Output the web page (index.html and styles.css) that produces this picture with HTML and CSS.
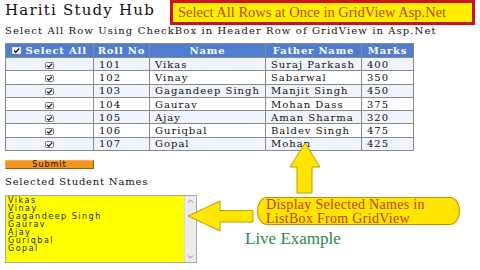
FILE: index.html
```html
<!DOCTYPE html>
<html>
<head>
<meta charset="utf-8">
<link rel="stylesheet" href="styles.css">
</head>
<body>
<div class="page">
  <header class="top">
    <h1 class="brand">Hariti Study Hub</h1>
    <div class="banner">Select All Rows at Once in GridView Asp.Net</div>
  </header>
  <p class="subtitle">Select All Row Using CheckBox in Header Row of GridView in Asp.Net</p>
  <table class="grid">
    <colgroup>
      <col class="c1"><col class="c2"><col class="c3"><col class="c4"><col class="c5">
    </colgroup>
    <thead>
      <tr>
        <th><svg class="hchk" viewBox="0 0 9 7" width="9" height="7"><rect x="0.5" y="0.5" width="8" height="6" fill="#fff" stroke="#dfe6f5"/><path d="M2 3.6 L3.8 5.2 L7.2 1.6" fill="none" stroke="#111" stroke-width="1.4"/></svg> Select All</th>
        <th>Roll No</th>
        <th>Name</th>
        <th>Father Name</th>
        <th>Marks</th>
      </tr>
    </thead>
    <tbody>
      <tr class="odd"><td class="chk"><svg viewBox="0 0 9 7" width="9" height="7"><rect x="0.5" y="0.5" width="8" height="6" rx="1" fill="#f6f6f6" stroke="#7a7a7a"/><path d="M2 3.6 L3.8 5.2 L7.2 1.6" fill="none" stroke="#111" stroke-width="1.2"/></svg></td><td>101</td><td>Vikas</td><td>Suraj Parkash</td><td>400</td></tr>
      <tr><td class="chk"><svg viewBox="0 0 9 7" width="9" height="7"><rect x="0.5" y="0.5" width="8" height="6" rx="1" fill="#f6f6f6" stroke="#7a7a7a"/><path d="M2 3.6 L3.8 5.2 L7.2 1.6" fill="none" stroke="#111" stroke-width="1.2"/></svg></td><td>102</td><td>Vinay</td><td>Sabarwal</td><td>350</td></tr>
      <tr class="odd"><td class="chk"><svg viewBox="0 0 9 7" width="9" height="7"><rect x="0.5" y="0.5" width="8" height="6" rx="1" fill="#f6f6f6" stroke="#7a7a7a"/><path d="M2 3.6 L3.8 5.2 L7.2 1.6" fill="none" stroke="#111" stroke-width="1.2"/></svg></td><td>103</td><td>Gagandeep Singh</td><td>Manjit Singh</td><td>450</td></tr>
      <tr><td class="chk"><svg viewBox="0 0 9 7" width="9" height="7"><rect x="0.5" y="0.5" width="8" height="6" rx="1" fill="#f6f6f6" stroke="#7a7a7a"/><path d="M2 3.6 L3.8 5.2 L7.2 1.6" fill="none" stroke="#111" stroke-width="1.2"/></svg></td><td>104</td><td>Gaurav</td><td>Mohan Dass</td><td>375</td></tr>
      <tr class="odd"><td class="chk"><svg viewBox="0 0 9 7" width="9" height="7"><rect x="0.5" y="0.5" width="8" height="6" rx="1" fill="#f6f6f6" stroke="#7a7a7a"/><path d="M2 3.6 L3.8 5.2 L7.2 1.6" fill="none" stroke="#111" stroke-width="1.2"/></svg></td><td>105</td><td>Ajay</td><td>Aman Sharma</td><td>320</td></tr>
      <tr><td class="chk"><svg viewBox="0 0 9 7" width="9" height="7"><rect x="0.5" y="0.5" width="8" height="6" rx="1" fill="#f6f6f6" stroke="#7a7a7a"/><path d="M2 3.6 L3.8 5.2 L7.2 1.6" fill="none" stroke="#111" stroke-width="1.2"/></svg></td><td>106</td><td>Guriqbal</td><td>Baldev Singh</td><td>475</td></tr>
      <tr class="odd"><td class="chk"><svg viewBox="0 0 9 7" width="9" height="7"><rect x="0.5" y="0.5" width="8" height="6" rx="1" fill="#f6f6f6" stroke="#7a7a7a"/><path d="M2 3.6 L3.8 5.2 L7.2 1.6" fill="none" stroke="#111" stroke-width="1.2"/></svg></td><td>107</td><td>Gopal</td><td>Mohan</td><td>425</td></tr>
    </tbody>
  </table>
  <button class="submit" type="button">Submit</button>
  <p class="label">Selected Student Names</p>
  <div class="bottom">
    <div class="listbox">
      <div class="items">
        <div>Vikas</div>
        <div>Vinay</div>
        <div>Gagandeep Singh</div>
        <div>Gaurav</div>
        <div>Ajay</div>
        <div>Guriqbal</div>
        <div>Gopal</div>
      </div>
      <div class="scroll">
        <svg viewBox="0 0 7 4" width="7" height="4"><path d="M1 3.5 L3.5 1 L6 3.5" fill="none" stroke="#888" stroke-width="1"/></svg>
        <svg viewBox="0 0 7 4" width="7" height="4"><path d="M1 0.5 L3.5 3 L6 0.5" fill="none" stroke="#888" stroke-width="1"/></svg>
      </div>
    </div>
    <div class="live">Live Example</div>
  </div>

  <svg class="arrow-left" viewBox="0 0 67 32" width="67" height="32"><polygon points="1,16 33,1 33,10.5 66,10.5 66,22 33,22 33,31" fill="#ffe600" stroke="#c49a00" stroke-width="1"/></svg>
  <svg class="arrow-up" viewBox="0 0 32 52" width="32" height="52"><polygon points="16,1 31,25 23,25 23,51 8,51 8,25 1,25" fill="#ffe600" stroke="#c49a00" stroke-width="1"/></svg>
  <div class="callout">Display Selected Names in<br>ListBox From GridView</div>
</div>
</body>
</html>
```
FILE: styles.css
```css
* { box-sizing: border-box; }
body { margin: 0; background: #fff; }
.page {
  position: relative;
  width: 480px;
  height: 270px;
  overflow: hidden;
  font-family: "DejaVu Serif", "Liberation Serif", serif;
  color: #111;
}
.top {
  display: flex;
  align-items: flex-start;
  height: 25px;
  padding-left: 5px;
}
.brand {
  margin: 0;
  width: 165px;
  padding-top: 3px;
  font-size: 15px;
  line-height: 14px;
  letter-spacing: 1.2px;
  font-weight: normal;
  color: #111;
  white-space: nowrap;
}
.banner {
  width: 305px;
  height: 25px;
  border: 3px solid #c8141e;
  background: #ffee00;
  color: #b84a10;
  font-family: "Liberation Serif", serif;
  font-size: 14.5px;
  line-height: 18px;
  padding-left: 5px;
  white-space: nowrap;
}
.subtitle {
  margin: 0 0 6px 5px;
  height: 12px;
  font-size: 10px;
  line-height: 12px;
  letter-spacing: 1.1px;
  white-space: nowrap;
}
.grid {
  margin-left: 5px;
  width: 408px;
  table-layout: fixed;
  border-collapse: collapse;
  font-size: 10px;
  letter-spacing: 1px;
}
.c1 { width: 88px; }
.c2 { width: 56px; }
.c3 { width: 116px; }
.c4 { width: 96px; }
.c5 { width: 52px; }
.grid th {
  height: 14px;
  padding: 0;
  background: #507cd1;
  color: #fff;
  font-weight: bold;
  line-height: 12px;
  letter-spacing: 0.8px;
  text-align: center;
  border: 1px solid #8a8a8a;
  white-space: nowrap;
}
.hchk { vertical-align: -0.5px; }
.grid td {
  height: 13.3px;
  padding: 0 0 0 5px;
  line-height: 11px;
  border: 1px solid #8a8a8a;
  background: #fff;
  white-space: nowrap;
  overflow: hidden;
}
.grid tr.odd td { background: #eff3fb; }
.grid td.chk { text-align: center; padding: 0; }
.grid td.chk svg { display: inline-block; vertical-align: middle; }
.submit {
  display: block;
  margin: 9px 0 0 5px;
  width: 89px;
  height: 9px;
  padding: 0;
  background: #f39320;
  border: 1px solid #9c5a12;
  border-top-color: #f7b060;
  border-left-color: #f7b060;
  font-family: "DejaVu Sans", sans-serif;
  font-size: 8px;
  line-height: 7px;
  letter-spacing: 1px;
  color: #111;
}
.label {
  margin: 3px 0 3px 5px;
  font-size: 10px;
  line-height: 20px;
  height: 20px;
  letter-spacing: 0.8px;
  white-space: nowrap;
}
.bottom {
  display: flex;
  align-items: flex-start;
  padding-left: 5px;
}
.listbox {
  display: flex;
  width: 192px;
  height: 68px;
  border: 1px solid #a8a8a8;
  background: #ffff00;
}
.items {
  flex: 1;
  padding: 1px 2px 0;
  font-family: "DejaVu Sans", sans-serif;
  font-size: 8px;
  line-height: 8px;
  letter-spacing: 1.5px;
  color: #2a2a10;
  white-space: nowrap;
}
.scroll {
  width: 12px;
  background: #ebebeb;
  border-left: 1px solid #d8d8d8;
  display: flex;
  flex-direction: column;
  justify-content: space-between;
  align-items: center;
  padding: 3px 0;
}
.live {
  margin-left: 48px;
  padding-top: 36px;
  font-family: "Liberation Serif", serif;
  font-size: 17px;
  line-height: 16px;
  color: #2a8a4a;
  white-space: nowrap;
}
.arrow-left { position: absolute; left: 187px; top: 200px; }
.arrow-up { position: absolute; left: 289px; top: 142px; }
.callout {
  position: absolute;
  left: 257px;
  top: 197px;
  width: 203px;
  height: 28px;
  padding: 0 0 0 8px;
  background: #ffe600;
  border: 1px solid #d08a00;
  border-radius: 10px / 14px;
  color: #bf3c14;
  font-family: "Liberation Serif", serif;
  font-size: 14px;
  line-height: 14px;
  letter-spacing: 0.3px;
  white-space: nowrap;
}
```
